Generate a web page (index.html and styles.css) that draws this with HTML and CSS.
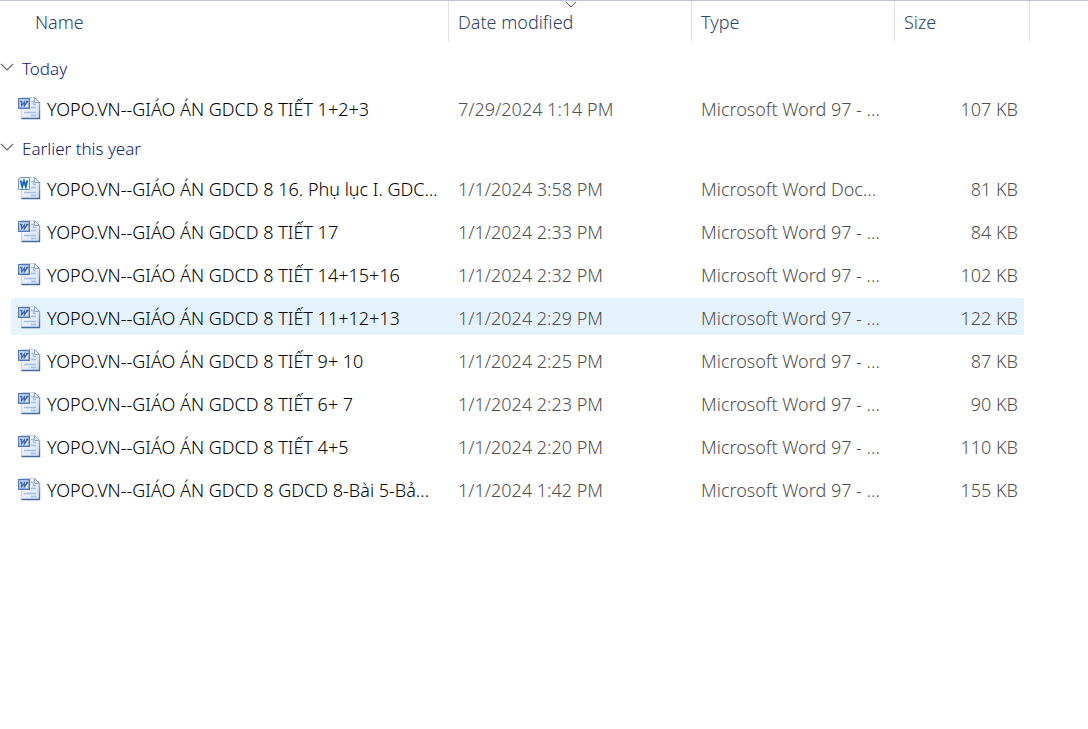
FILE: index.html
```html
<!DOCTYPE html>
<html lang="vi">
<head>
<meta charset="utf-8">
<title>Files</title>
<link rel="stylesheet" href="styles.css">
</head>
<body>
<svg class="sprite" aria-hidden="true">
  <defs>
    <linearGradient id="paper" x1="0" y1="0" x2="1" y2="1">
      <stop offset="0" stop-color="#ffffff"/><stop offset="1" stop-color="#cfe0f6"/>
    </linearGradient>
    <linearGradient id="edge" x1="0" y1="0" x2="0" y2="1">
      <stop offset="0" stop-color="#a3b5cc"/><stop offset="1" stop-color="#48699b"/>
    </linearGradient>
    <linearGradient id="badge" x1="0" y1="0" x2="1" y2="1">
      <stop offset="0" stop-color="#9dbaf0"/><stop offset="1" stop-color="#4a70bf"/>
    </linearGradient>
    <symbol id="page" viewBox="0 0 24 24">
      <path d="M4.500 1.500H18L22.500 6V22.500H4.500Z" fill="url(#paper)" stroke="#c6d6ea"/>
      <path d="M22.500 6V22.500H4.500" fill="none" stroke="url(#edge)" stroke-width="1.400"/>
      <path d="M17.500 1.500V6.500H22.500Z" fill="#edf4fc" stroke="#8ea4c0"/>
      <path d="M14 5.500H16.500V8.500H19M14 11.500H19M7 16.500H19M14 19.500H19" fill="none" stroke="#a6c0e4" stroke-width="1.400"/>
    </symbol>
    <symbol id="doc" viewBox="0 0 24 24">
      <use href="#page"/>
      <rect x="1.500" y="2.500" width="11" height="10" fill="url(#badge)" stroke="#5479be"/>
      <rect x="2.500" y="3.500" width="9" height="8" fill="#d5e2f8"/>
      <path d="M3 5.500H5.500M4.500 5.500L4.500 9.800L7.500 5.800L7.300 9.800L10.500 5.500M9 5.500H11.500" fill="none" stroke="#3f64b4" stroke-width="1.300"/>
    </symbol>
    <symbol id="docx" viewBox="0 0 24 24">
      <use href="#page"/>
      <path d="M1.500 4Q1.500 1.500 4 1.500H12.500V13.500H1.500Z" fill="#e9f3fd" stroke="#7896c4"/>
      <path d="M3.700 4.500L5.200 10.500L7 5L8.800 10.500L10.300 4.500" fill="none" stroke="#1768bd" stroke-width="1.900"/>
    </symbol>
    <symbol id="chevron" viewBox="0 0 14 8">
      <path d="M1 1L7 7L13 1" fill="none" stroke="currentColor" stroke-width="1.100"/>
    </symbol>
  </defs>
</svg>
<table class="files">
  <colgroup><col class="col-name"><col class="col-date"><col class="col-type"><col class="col-size"><col></colgroup>
  <thead>
    <tr>
      <th scope="col" class="first"><button class="sort">Name</button></th>
      <th scope="col"><button class="sort">Date modified</button><svg class="sort-mark" aria-hidden="true"><use href="#chevron"/></svg></th>
      <th scope="col"><button class="sort">Type</button></th>
      <th scope="col"><button class="sort">Size</button></th>
      <td></td>
    </tr>
  </thead>
  <tbody>
    <tr class="lead"><th colspan="5" scope="rowgroup"><button class="group"><svg class="chevron" aria-hidden="true"><use href="#chevron"/></svg>Today</button></th></tr>
    <tr class="file"><td><div class="cell name"><svg class="icon"><use href="#doc"/></svg>YOPO.VN--GIÁO ÁN GDCD 8 TIẾT 1+2+3</div></td><td><div class="cell">7/29/2024 1:14 PM</div></td><td><div class="cell">Microsoft Word 97 - ...</div></td><td><div class="cell size">107 KB</div></td></tr>
  </tbody>
  <tbody>
    <tr><th colspan="5" scope="rowgroup"><button class="group"><svg class="chevron" aria-hidden="true"><use href="#chevron"/></svg>Earlier this year</button></th></tr>
    <tr class="file"><td><div class="cell name"><svg class="icon"><use href="#docx"/></svg>YOPO.VN--GIÁO ÁN GDCD 8 16. Phụ lục I. GDC...</div></td><td><div class="cell">1/1/2024 3:58 PM</div></td><td><div class="cell">Microsoft Word Doc...</div></td><td><div class="cell size">81 KB</div></td></tr>
    <tr class="file"><td><div class="cell name"><svg class="icon"><use href="#doc"/></svg>YOPO.VN--GIÁO ÁN GDCD 8 TIẾT 17</div></td><td><div class="cell">1/1/2024 2:33 PM</div></td><td><div class="cell">Microsoft Word 97 - ...</div></td><td><div class="cell size">84 KB</div></td></tr>
    <tr class="file"><td><div class="cell name"><svg class="icon"><use href="#doc"/></svg>YOPO.VN--GIÁO ÁN GDCD 8 TIẾT 14+15+16</div></td><td><div class="cell">1/1/2024 2:32 PM</div></td><td><div class="cell">Microsoft Word 97 - ...</div></td><td><div class="cell size">102 KB</div></td></tr>
    <tr class="file active"><td><div class="cell name"><svg class="icon"><use href="#doc"/></svg>YOPO.VN--GIÁO ÁN GDCD 8 TIẾT 11+12+13</div></td><td><div class="cell">1/1/2024 2:29 PM</div></td><td><div class="cell">Microsoft Word 97 - ...</div></td><td><div class="cell size">122 KB</div></td></tr>
    <tr class="file"><td><div class="cell name"><svg class="icon"><use href="#doc"/></svg>YOPO.VN--GIÁO ÁN GDCD 8 TIẾT 9+ 10</div></td><td><div class="cell">1/1/2024 2:25 PM</div></td><td><div class="cell">Microsoft Word 97 - ...</div></td><td><div class="cell size">87 KB</div></td></tr>
    <tr class="file"><td><div class="cell name"><svg class="icon"><use href="#doc"/></svg>YOPO.VN--GIÁO ÁN GDCD 8 TIẾT 6+ 7</div></td><td><div class="cell">1/1/2024 2:23 PM</div></td><td><div class="cell">Microsoft Word 97 - ...</div></td><td><div class="cell size">90 KB</div></td></tr>
    <tr class="file"><td><div class="cell name"><svg class="icon"><use href="#doc"/></svg>YOPO.VN--GIÁO ÁN GDCD 8 TIẾT 4+5</div></td><td><div class="cell">1/1/2024 2:20 PM</div></td><td><div class="cell">Microsoft Word 97 - ...</div></td><td><div class="cell size">110 KB</div></td></tr>
    <tr class="file"><td><div class="cell name"><svg class="icon"><use href="#doc"/></svg>YOPO.VN--GIÁO ÁN GDCD 8 GDCD 8-Bài 5-Bả...</div></td><td><div class="cell">1/1/2024 1:42 PM</div></td><td><div class="cell">Microsoft Word 97 - ...</div></td><td><div class="cell size">155 KB</div></td></tr>
  </tbody>
</table>
</body>
</html>
```

FILE: styles.css
```css
* { box-sizing: border-box; }

body {
  margin: 0;
  background: #fff;
  color: #505050;
  font: 300 18px/24px "Noto Sans", "Open Sans", sans-serif;
}

.sprite { display: block; width: 0; height: 0; }

.files {
  width: 100%;
  table-layout: fixed;
  border-spacing: 0;
  border-top: 1px solid #b8c8da;
}

.col-name { width: 449px; }
.col-date { width: 243px; }
.col-type { width: 203px; }
.col-size { width: 135px; }

th, td { padding: 0; font-weight: 300; text-align: left; }

thead th {
  position: relative;
  height: 41px;
  border-right: 1px solid #e2e2e2;
}

button {
  padding: 0;
  border: 0;
  background: none;
  font: inherit;
  text-align: left;
}

.sort {
  display: block;
  width: 100%;
  height: 41px;
  padding: 0 0 0 9px;
  color: #2c4468;
}

.first .sort { padding-left: 35px; }

.sort-mark {
  position: absolute;
  top: 0;
  left: 50%;
  width: 12px;
  height: 7px;
  margin-left: -5px;
  color: #444;
}

.lead th { padding-top: 7px; }

.group {
  display: flex;
  align-items: center;
  gap: 8px;
  width: 100%;
  height: 37px;
  padding-top: 2px;
  color: #0c2080;
  font-size: 17px;
}

.chevron { width: 14px; height: 8px; margin-bottom: 4px; color: #666; }

.file td { padding: 3px 0; }

.cell {
  display: flex;
  align-items: center;
  height: 37px;
  padding: 3px 0 0 9px;
  white-space: nowrap;
}

.name {
  gap: 6px;
  margin-left: 11px;
  padding-left: 6px;
  border-radius: 2px 0 0 2px;
  color: #000;
}

.icon { flex: none; width: 24px; height: 24px; margin-bottom: 2px; }

.size {
  justify-content: flex-end;
  margin-right: 6px;
  padding-right: 6px;
  border-radius: 0 2px 2px 0;
}

.active .cell { background: #e5f3ff; }
```
